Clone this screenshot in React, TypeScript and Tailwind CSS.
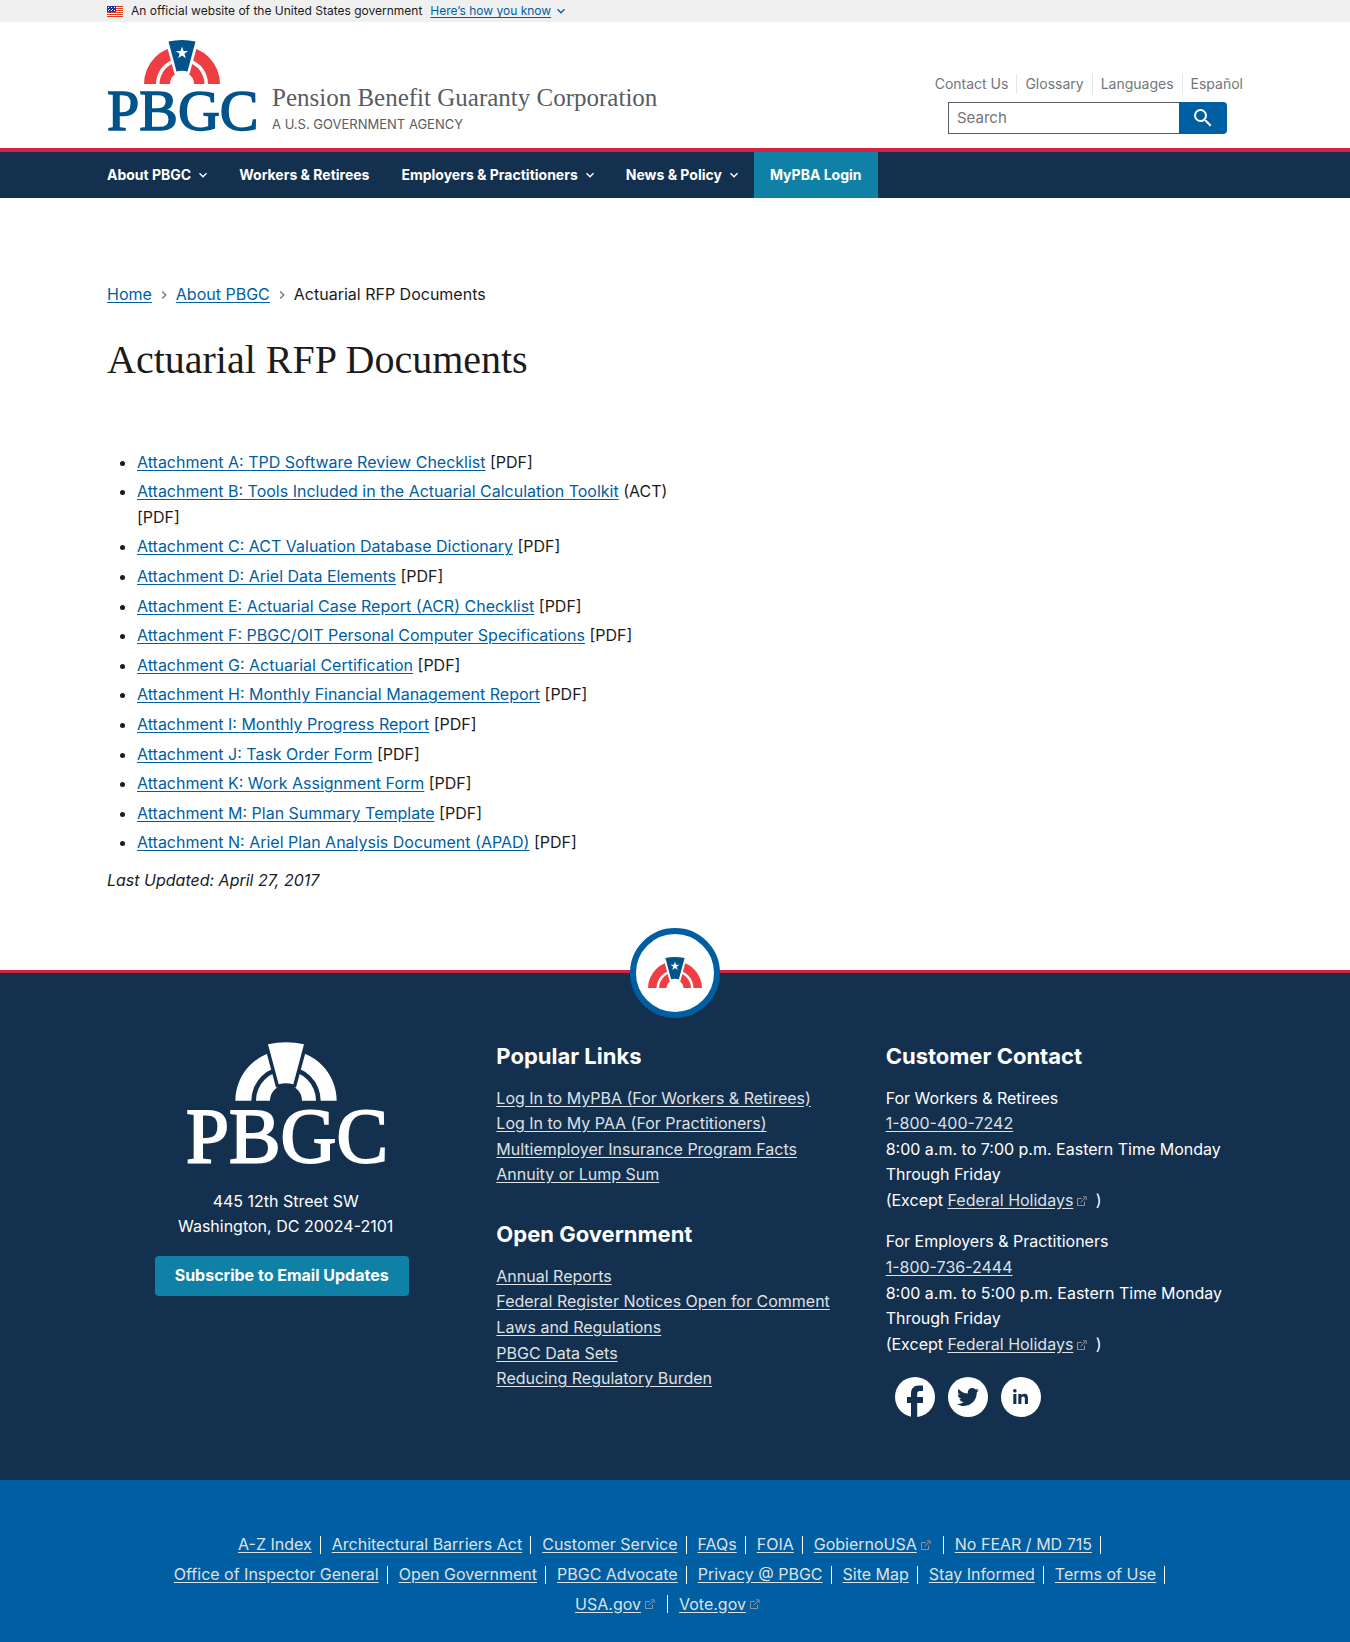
import React from "react";
import { MdExpandMore, MdNavigateNext, MdSearch } from "react-icons/md";
import { FaLinkedinIn, FaTwitter } from "react-icons/fa";

const attachments: [string, string][] = [
  ["Attachment A: TPD Software Review Checklist", "[PDF]"],
  ["Attachment B: Tools Included in the Actuarial Calculation Toolkit", "(ACT) [PDF]"],
  ["Attachment C: ACT Valuation Database Dictionary", "[PDF]"],
  ["Attachment D: Ariel Data Elements", "[PDF]"],
  ["Attachment E: Actuarial Case Report (ACR) Checklist", "[PDF]"],
  ["Attachment F: PBGC/OIT Personal Computer Specifications", "[PDF]"],
  ["Attachment G: Actuarial Certification", "[PDF]"],
  ["Attachment H: Monthly Financial Management Report", "[PDF]"],
  ["Attachment I: Monthly Progress Report", "[PDF]"],
  ["Attachment J: Task Order Form", "[PDF]"],
  ["Attachment K: Work Assignment Form", "[PDF]"],
  ["Attachment M: Plan Summary Template", "[PDF]"],
  ["Attachment N: Ariel Plan Analysis Document (APAD)", "[PDF]"],
];

const popularLinks = [
  "Log In to MyPBA (For Workers & Retirees)",
  "Log In to My PAA (For Practitioners)",
  "Multiemployer Insurance Program Facts",
  "Annuity or Lump Sum",
];

const governmentLinks = [
  "Annual Reports",
  "Federal Register Notices Open for Comment",
  "Laws and Regulations",
  "PBGC Data Sets",
  "Reducing Regulatory Burden",
];

const legalLinks: { label: string; external?: boolean }[] = [
  { label: "A-Z Index" },
  { label: "Architectural Barriers Act" },
  { label: "Customer Service" },
  { label: "FAQs" },
  { label: "FOIA" },
  { label: "GobiernoUSA", external: true },
  { label: "No FEAR / MD 715" },
  { label: "Office of Inspector General" },
  { label: "Open Government" },
  { label: "PBGC Advocate" },
  { label: "Privacy @ PBGC" },
  { label: "Site Map" },
  { label: "Stay Informed" },
  { label: "Terms of Use" },
  { label: "USA.gov", external: true },
  { label: "Vote.gov", external: true },
];

const navItems: { label: string; menu?: boolean }[] = [
  { label: "About PBGC", menu: true },
  { label: "Workers & Retirees" },
  { label: "Employers & Practitioners", menu: true },
  { label: "News & Policy", menu: true },
];

function Arch({ ring, wedge, gap, star }: { ring: string; wedge: string; gap: string; star?: boolean }) {
  return (
    <g>
      <path d="M0 44A38 38 0 0 1 76 44H64A26 26 0 0 0 12 44Z" fill={ring} />
      <path d="M15.5 44A22.5 22.5 0 0 1 60.5 44H50A12 12 0 0 0 26 44Z" fill={ring} />
      <path d="M21 -1H55L45.5 34H30.5Z" fill={gap} />
      <path d="M24.5 1.5Q38 -1.500 51.500 1.500L43.500 31.500Q38 30 32.500 31.500Z" fill={wedge} />
      {star && <path d="M38 6.500l1.500 4.400h4.600l-3.700 2.800 1.400 4.500L38 15.500l-3.800 2.700 1.400-4.500-3.700-2.800h4.600Z" fill="#fff" />}
    </g>
  );
}

function Logo({ white, className }: { white?: boolean; className: string }) {
  const ink = white ? "#fff" : "#00538b";
  return (
    <svg viewBox="0 0 150 92" className={className} role="img" aria-label="PBGC logo">
      <g transform="translate(37 0)">
        <Arch ring={white ? "#fff" : "#ee3e43"} wedge={ink} gap={white ? "#14304f" : "#fff"} star={!white} />
      </g>
      <text x="0" y="90" fontFamily="Liberation Serif, serif" fontSize="58" fill={ink} stroke={ink} strokeWidth="1.5">
        PBGC
      </text>
    </svg>
  );
}

function Flag() {
  return (
    <svg viewBox="0 0 16 11" className="h-[11px] w-4" aria-hidden="true">
      <path fill="#fff" d="M0 0h16v11H0z" />
      <path fill="#db3e1f" d="M0 0h16v1H0zM0 2h16v1H0zM0 4h16v1H0zM0 6h16v1H0zM0 8h16v1H0zM0 10h16v1H0z" />
      <path fill="#1e33b1" d="M0 0h9v6H0z" />
      <path fill="#fff" d="M1 1h1v1H1zM4 1h1v1H4zM7 1h1v1H7zM2 3h1v1H2zM5 3h1v1H5zM1 4h1v1H1zM4 4h1v1H4zM7 4h1v1H7z" />
    </svg>
  );
}

function External() {
  return (
    <svg viewBox="0 0 10 10" className="mr-1 ml-1 inline-block size-[10px] align-baseline" fill="none" stroke="#8d9297" aria-hidden="true">
      <path d="M5 2.500H.5v7h7V5.500M3.500 6.500l5-5M6 .8h3.200V4" />
    </svg>
  );
}

function FooterLink({ children }: { children: React.ReactNode }) {
  return (
    <a href="#" className="text-[#dfe1e2] underline underline-offset-2">
      {children}
    </a>
  );
}

function LinkGroup({ title, links }: { title: string; links: string[] }) {
  return (
    <section>
      <h3 className="mb-4 text-[22px] leading-7 font-bold">{title}</h3>
      <ul>
        {links.map((l) => (
          <li key={l}>
            <FooterLink>{l}</FooterLink>
          </li>
        ))}
      </ul>
    </section>
  );
}

function Contact({ who, phone, close }: { who: string; phone: string; close: string }) {
  return (
    <p className="mb-4">
      {who}
      <br />
      <FooterLink>{phone}</FooterLink>
      <br />
      8:00 a.m. to {close} p.m. Eastern Time Monday Through Friday
      <br />
      (Except <FooterLink>Federal Holidays</FooterLink>
      <External /> )
    </p>
  );
}

const container = "mx-auto w-full max-w-[1200px] px-8";

export default function App() {
  return (
    <div className="min-h-screen bg-white font-['Inter',sans-serif] text-base leading-[1.6] text-[#1b1b1b]">
      <div className="bg-[#f0f0f0]">
        <div className={`${container} flex h-[22px] items-center text-xs`}>
          <Flag />
          <span className="ml-2">An official website of the United States government</span>
          <button type="button" className="ml-2 flex items-center text-[#005ea2]">
            <span className="underline underline-offset-2">Here’s how you know</span>
            <MdExpandMore className="ml-0.5 size-4" />
          </button>
        </div>
      </div>

      <header>
        <div className={`${container} flex items-end justify-between pt-[18px] pb-3.5`}>
          <a href="#" className="flex items-end text-[#565c65]">
            <Logo className="mb-0.5 h-[92px] w-[150px] overflow-visible" />
            <span className="ml-[15px] flex flex-col">
              <span className="font-['Liberation_Serif',serif] text-[25px] leading-8">Pension Benefit Guaranty Corporation</span>
              <span className="text-[13px] leading-5">A U.S. GOVERNMENT AGENCY</span>
            </span>
          </a>
          <div className="flex flex-col items-end">
            <ul className="mb-2 flex text-sm leading-5 text-[#71767a]">
              {["Contact Us", "Glossary", "Languages", "Español"].map((l) => (
                <li key={l} className="border-l border-[#e6e6e6] px-2 first:border-0 last:pr-0">
                  <a href="#">{l}</a>
                </li>
              ))}
            </ul>
            <form role="search" className="mr-4 flex h-8" onSubmit={(e) => e.preventDefault()}>
              <input
                type="search"
                aria-label="Search"
                placeholder="Search"
                className="w-[231px] border border-r-0 border-[#565c65] px-2 text-[15px] placeholder:text-[#757575]"
              />
              <button type="submit" aria-label="Submit search" className="flex w-12 items-center justify-center rounded-r bg-[#005ea2] text-white">
                <MdSearch className="size-6" />
              </button>
            </form>
          </div>
        </div>
        <nav aria-label="Primary" className="border-t-4 border-[#d62140] bg-[#14304f] text-white">
          <div className={container}>
            <ul className="-ml-4 flex h-[46px] text-sm font-bold">
              {navItems.map((item) => (
                <li key={item.label} className="flex">
                  {item.menu ? (
                    <button type="button" className="flex items-center px-4">
                      {item.label}
                      <MdExpandMore className="-mr-1 ml-1 size-4" />
                    </button>
                  ) : (
                    <a href="#" className="flex items-center px-4">
                      {item.label}
                    </a>
                  )}
                </li>
              ))}
              <li className="flex">
                <a href="#" className="flex items-center bg-[#0f81a6] px-4">
                  MyPBA Login
                </a>
              </li>
            </ul>
          </div>
        </nav>
      </header>

      <main className={`${container} pt-[84px] pb-[76px]`}>
        <nav aria-label="Breadcrumbs">
          <ol className="flex items-center">
            <li>
              <a href="#" className="text-[#005ea2] underline underline-offset-2">Home</a>
            </li>
            <li aria-hidden="true">
              <MdNavigateNext className="mx-1 size-4 text-[#71767a]" />
            </li>
            <li>
              <a href="#" className="text-[#005ea2] underline underline-offset-2">About PBGC</a>
            </li>
            <li aria-hidden="true">
              <MdNavigateNext className="mx-1 size-4 text-[#71767a]" />
            </li>
            <li aria-current="page">Actuarial RFP Documents</li>
          </ol>
        </nav>
        <h1 className="mt-7 font-['Liberation_Serif',serif] text-[40px] leading-12">Actuarial RFP Documents</h1>
        <ul className="mt-[66px] max-w-[568px] list-disc pl-[30px]">
          {attachments.map(([label, suffix]) => (
            <li key={label} className="mb-1">
              <a href="#" className="text-[#005ea2] underline underline-offset-2">{label}</a> {suffix}
            </li>
          ))}
        </ul>
        <p className="mt-3 italic">Last Updated: April 27, 2017</p>
      </main>

      <footer className="text-white">
        <div className="relative border-t-3 border-[#d62140] bg-[#14304f] pt-[69px] pb-[63px]">
          <div className="absolute -top-[45px] left-1/2 flex size-[90px] -translate-x-1/2 items-center justify-center rounded-full border-6 border-[#005ea2] bg-white">
            <svg viewBox="0 0 76 44" className="w-[54px]" aria-hidden="true">
              <Arch ring="#ee3e43" wedge="#00538b" gap="#fff" star />
            </svg>
          </div>
          <div className={`${container} grid grid-cols-3 gap-8`}>
            <div className="flex flex-col items-center text-center">
              <Logo white className="h-[123px] w-[200px] overflow-visible" />
              <address className="mt-6 not-italic">
                445 12th Street SW
                <br />
                Washington, DC 20024-2101
              </address>
              <a href="#" className="mt-4 mr-2 flex h-10 items-center rounded bg-[#0f81a6] px-5 font-bold">
                Subscribe to Email Updates
              </a>
            </div>
            <div className="flex flex-col gap-8">
              <LinkGroup title="Popular Links" links={popularLinks} />
              <LinkGroup title="Open Government" links={governmentLinks} />
            </div>
            <section>
              <h3 className="mb-4 text-[22px] leading-7 font-bold">Customer Contact</h3>
              <Contact who="For Workers & Retirees" phone="1-800-400-7242" close="7:00" />
              <Contact who="For Employers & Practitioners" phone="1-800-736-2444" close="5:00" />
              <div className="mt-5 ml-[9px] flex gap-[13px] text-[#14304f]">
                <a href="#" aria-label="Facebook" className="size-10">
                  <svg viewBox="0 0 40 40" className="size-10" aria-hidden="true">
                    <circle cx="20" cy="20" r="20" fill="#fff" />
                    <path d="M16 40V26H12V20H16V16.500C16 11.500 19 8.500 23.500 8.500H28V14H25C23 14 22.200 15 22.200 16.800V20H28V26H22.200V40Z" fill="currentColor" />
                  </svg>
                </a>
                <a href="#" aria-label="Twitter" className="flex size-10 items-center justify-center rounded-full bg-white">
                  <FaTwitter className="size-[22px]" />
                </a>
                <a href="#" aria-label="LinkedIn" className="flex size-10 items-center justify-center rounded-full bg-white">
                  <FaLinkedinIn className="size-[17px]" />
                </a>
              </div>
            </section>
          </div>
        </div>
        <div className="bg-[#005ea2] pt-[52px] pb-8">
          <ul className="mx-auto flex max-w-[1064px] flex-wrap justify-center px-4">
            {legalLinks.map((l, i) => (
              <li key={l.label} className="mr-[11px] mb-1 flex items-center">
                <FooterLink>{l.label}</FooterLink>
                {l.external && <External />}
                {i < legalLinks.length - 1 && <span className="ml-2 h-[18px] w-px bg-white" />}
              </li>
            ))}
          </ul>
        </div>
      </footer>
    </div>
  );
}
